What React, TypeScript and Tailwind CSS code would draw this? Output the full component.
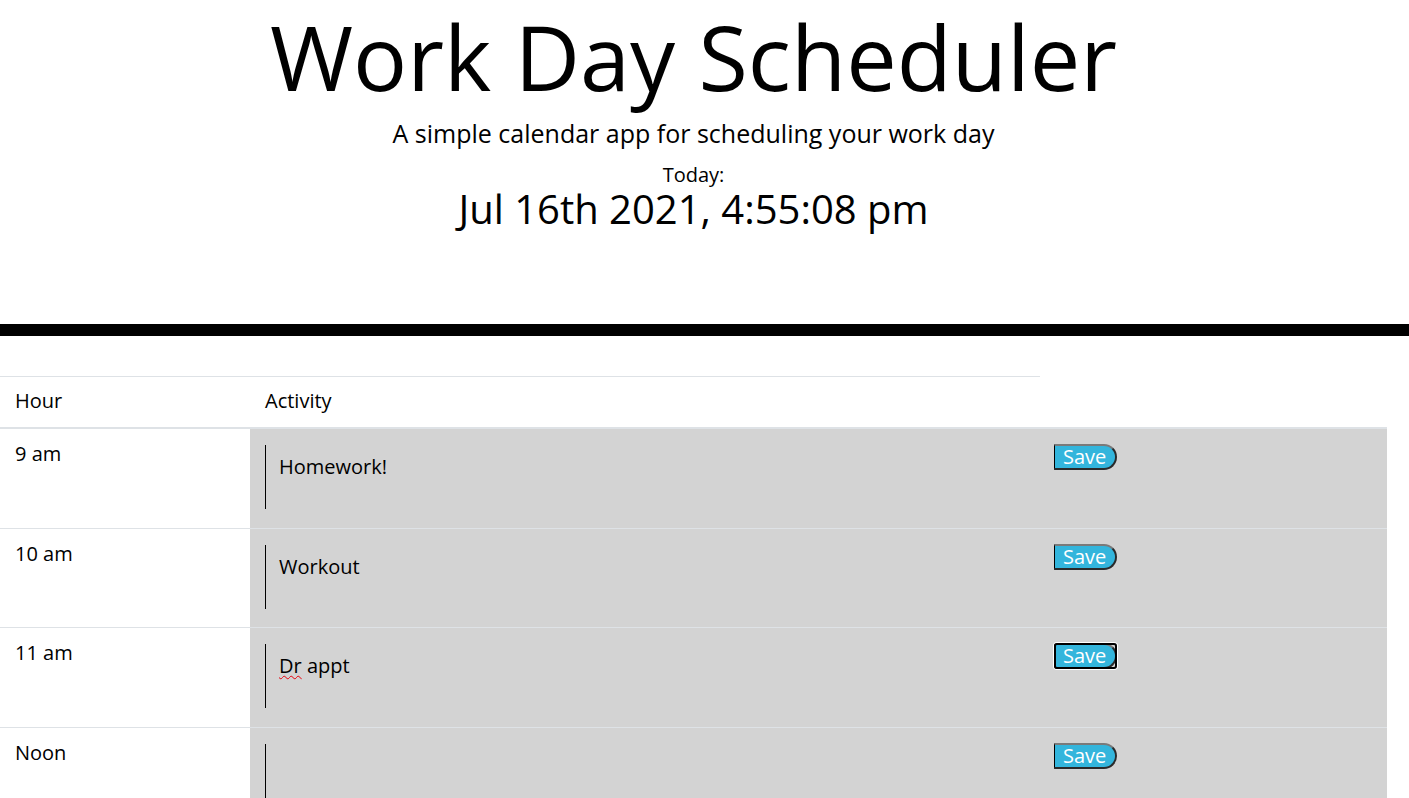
import React from "react";

const rows = [
  { hour: "9 am", text: "Homework!" },
  { hour: "10 am", text: "Workout" },
  { hour: "11 am", text: "Dr appt", focused: true },
  { hour: "Noon", text: "" },
  { hour: "1 pm", text: "" },
  { hour: "2 pm", text: "" },
  { hour: "3 pm", text: "" },
  { hour: "4 pm", text: "" },
  { hour: "5 pm", text: "" },
];

function SaveButton({ focused }: { focused?: boolean }) {
  return (
    <button className="relative w-[63px] h-[26px] bg-[#33b5dc] text-white text-[20px] leading-[22px] border-l border-t-2 border-r-2 border-b-2 border-l-black border-t-[#7a7a7a] border-r-[#2a2a2a] border-b-[#2a2a2a] rounded-r-[15px] pl-[2px] text-left">
      <span className="pl-[6px]">Save</span>
      {focused && (
        <span className="absolute -left-[1px] -top-[2px] w-[63px] h-[26px] border-2 border-black rounded-[3px] shadow-[0_0_0_1px_white]"></span>
      )}
    </button>
  );
}

export default function App() {
  return (
    <div className="bg-white text-black font-['Open_Sans',sans-serif] w-[1409px]">
      <div className="h-[336px] border-b-[12px] border-black flex flex-col items-center pr-[22px]">
        <h1 className="mt-[11px] text-[90px] leading-none font-normal">Work Day Scheduler</h1>
        <p className="mt-[14px] text-[25px] leading-[36px] font-normal">
          A simple calendar app for scheduling your work day
        </p>
        <p className="mt-[10px] text-[20px] leading-[28px] font-normal">Today:</p>
        <p className="text-[40px] leading-none font-normal">Jul 16th 2021, 4:55:08 pm</p>
      </div>

      <div className="mt-[40px] w-[1387px]">
        <div className="border-b-2 border-[#dee2e6]">
          <div className="w-[1040px] border-t border-[#dee2e6] flex h-[51px] text-[20px] leading-[30px]">
            <div className="w-[250px] pl-[15px] pt-[9px]">Hour</div>
            <div className="pl-[15px] pt-[9px]">Activity</div>
          </div>
        </div>
        {rows.map((r) => (
          <div key={r.hour} className="flex h-[99.5px] border-b border-[#dee2e6]">
            <div className="w-[250px] shrink-0 pl-[15px] pt-[10px] text-[20px] leading-[30px]">
              {r.hour}
            </div>
            <div className="flex flex-1 bg-[#d3d3d3]">
              <div className="w-[790px] pl-[15px] pr-[15px] pt-[16px]">
                <div className="h-[64px] border-l border-black pl-[13px] pt-[7px] text-[20px] leading-[30px]">
                  {r.text === "Dr appt" ? (
                    <>
                      <span className="underline decoration-wavy decoration-red-600 decoration-1 underline-offset-2">Dr</span> appt
                    </>
                  ) : (
                    r.text
                  )}
                </div>
              </div>
              <div className="pl-[14px] pt-[15px]">
                <SaveButton focused={r.focused} />
              </div>
            </div>
          </div>
        ))}
      </div>
    </div>
  );
}
